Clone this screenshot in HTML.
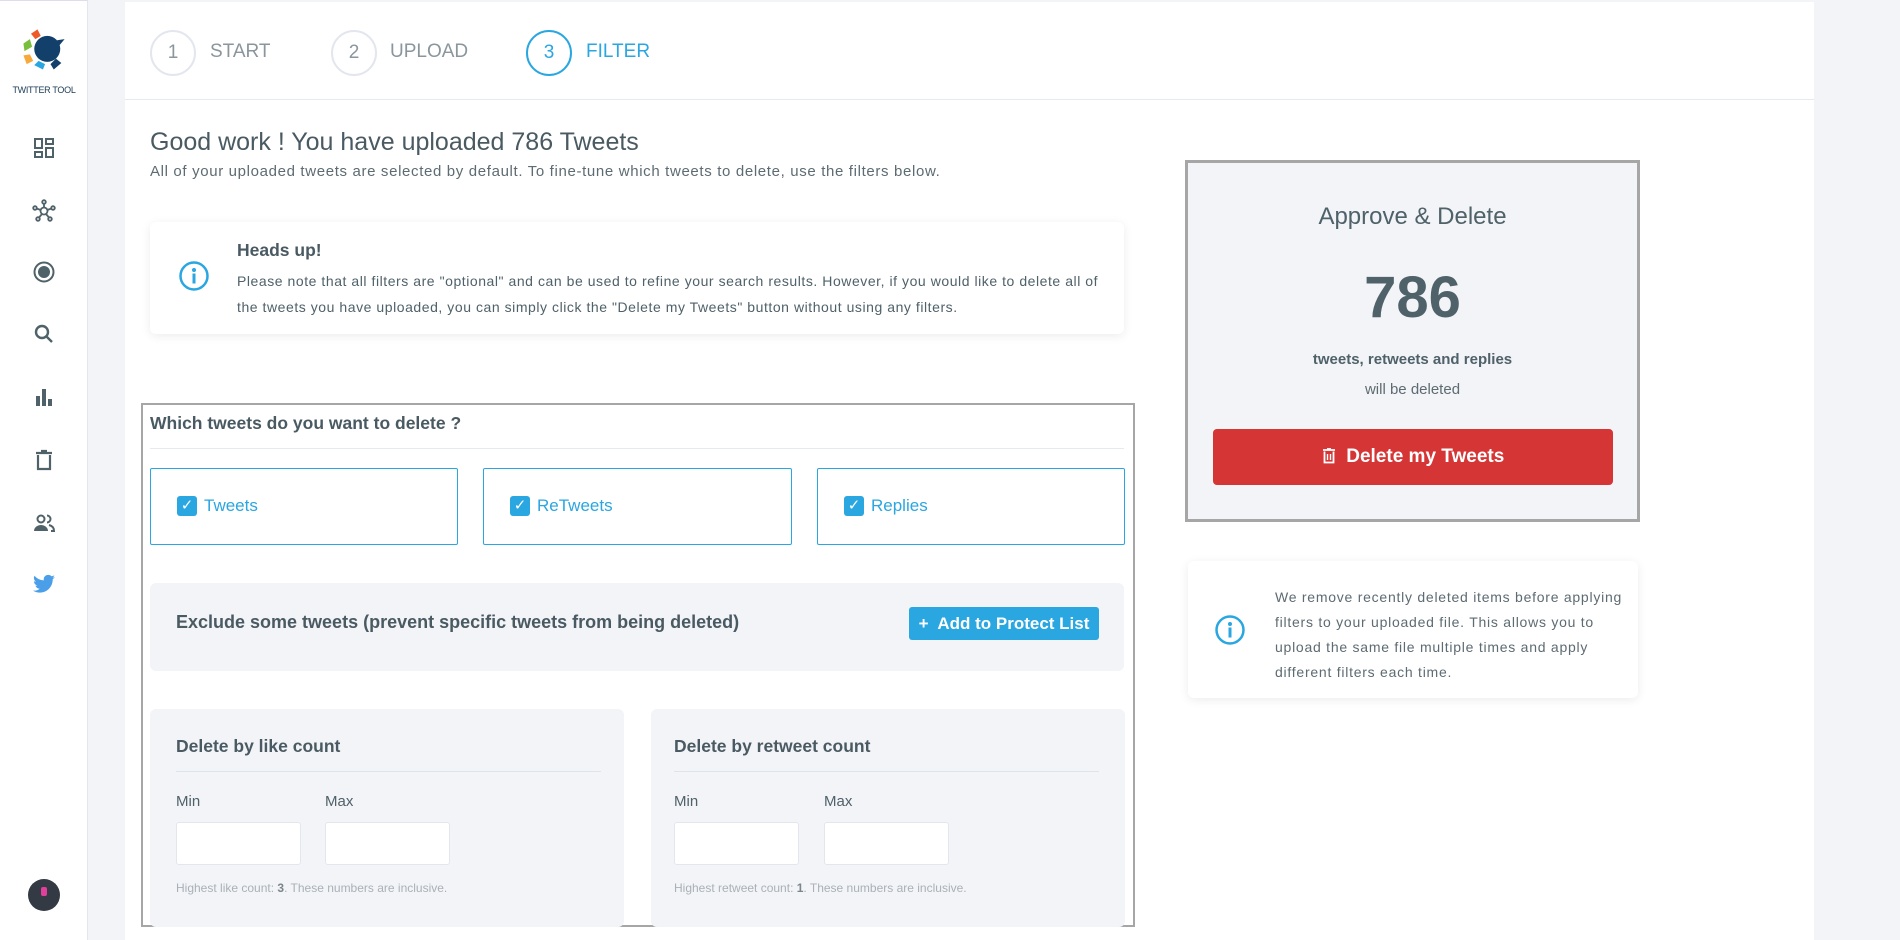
<!DOCTYPE html>
<html><head><meta charset="utf-8"><style>
*{box-sizing:border-box;margin:0;padding:0}
body{width:1900px;height:940px;overflow:hidden;background:#f3f4f8;font-family:"Liberation Sans",sans-serif;color:#4f6169;position:relative}
.abs{position:absolute}
#side{left:0;top:0;width:88px;height:940px;background:#fff;border-right:1px solid #e3e6ee;border-top:1px solid #dde}
#main{left:125px;top:2px;width:1689px;height:938px;background:#fff}
.ic{position:absolute;left:32px;width:24px;height:24px}
.step{position:absolute;top:28px;width:46px;height:46px;border:2px solid #e3e6ee;border-radius:50%;text-align:center;line-height:42px;font-size:19px;color:#8a969c}
.stl{position:absolute;top:39px;font-size:19px;color:#8a969c}
.cb{position:absolute;top:468px;height:77px;border:1px solid #2aa6e0;border-radius:2px}
.cb span{position:absolute;left:26px;top:27px;width:20px;height:20px;background:#2aa6e0;border-radius:3px;color:#fff;font-size:15px;text-align:center;line-height:20px}
.cb b{position:absolute;left:53px;top:27px;font-weight:normal;color:#2aa6e0;font-size:17px}
.panel{position:absolute;background:#f3f4f8;border-radius:6px}
.inp{position:absolute;width:125px;height:43px;background:#fff;border:1px solid #e3e6ee;border-radius:3px}
</style></head><body>
<div id="side" class="abs">
<svg class="abs" style="left:18px;top:24px" width="52" height="50" viewBox="0 0 48 46">
<path d="M12 8 L18 4 L21 10 L16 13Z" fill="#ef5a28"/>
<path d="M5 17 L11 13 L13 20 L6 24Z" fill="#7bbd3c"/>
<path d="M5 28 L11 27 L14 33 L8 36Z" fill="#f7a93b"/>
<path d="M15 37 L19 33 L25 36 L23 41Z" fill="#2aa6e0"/>
<circle cx="27" cy="22" r="12" fill="#12406b"/>
<path d="M36 14 L43 13 L38 19Z" fill="#12406b"/>
<path d="M30 36 L35 31 L40 35 L33 41Z" fill="#12406b"/>
</svg>
<div class="abs" style="left:0;width:88px;top:84px;text-align:center;font-size:9px;color:#1a3a55;letter-spacing:-0.3px">TWITTER TOOL</div>
<svg class="ic" style="top:135px" viewBox="0 0 24 24" fill="none" stroke="#4f6169" stroke-width="2"><rect x="3" y="3" width="7" height="9"/><rect x="14" y="3" width="7" height="5"/><rect x="14" y="12" width="7" height="9"/><rect x="3" y="16" width="7" height="5"/></svg>
<svg class="ic" style="top:198px" viewBox="0 0 24 24" fill="none" stroke="#4f6169" stroke-width="1.8"><circle cx="12" cy="12" r="3.5"/><circle cx="12" cy="3" r="1.8"/><circle cx="3" cy="9" r="1.8"/><circle cx="21" cy="9" r="1.8"/><circle cx="6" cy="20" r="1.8"/><circle cx="18" cy="20" r="1.8"/><path d="M12 5v3.5M4.8 9.6l4 1.4M19.2 9.6l-4 1.4M7 18.5l3-3.5M17 18.5l-3-3.5"/></svg>
<svg class="ic" style="top:259px" viewBox="0 0 24 24"><circle cx="12" cy="12" r="9.5" fill="none" stroke="#4f6169" stroke-width="2"/><circle cx="12" cy="12" r="6" fill="#4f6169"/></svg>
<svg class="ic" style="top:321px" viewBox="0 0 24 24" fill="none" stroke="#4f6169" stroke-width="2.4"><circle cx="10" cy="10" r="6"/><path d="M14.5 14.5L20 20"/></svg>
<svg class="ic" style="top:384px" viewBox="0 0 24 24" fill="#4f6169"><rect x="4" y="11" width="4" height="10"/><rect x="10" y="4" width="4" height="17"/><rect x="16" y="14" width="4" height="7"/></svg>
<svg class="ic" style="top:447px" viewBox="0 0 24 24" fill="none" stroke="#4f6169" stroke-width="2.2"><path d="M4 5h16M9 3h6M6 7v14h12V7"/></svg>
<svg class="ic" style="top:510px" viewBox="0 0 24 24" fill="#4f6169"><circle cx="9" cy="8" r="3.5" fill="none" stroke="#4f6169" stroke-width="2"/><path d="M2 20c0-4 4-6 7-6s7 2 7 6z"/><path d="M15 4.5a3.5 3.5 0 010 7M17 14c2 .5 5 2 5 6h-3" fill="none" stroke="#4f6169" stroke-width="2"/></svg>
<svg class="ic" style="top:571px" viewBox="0 0 24 24" fill="#4a9fe8"><path d="M23 5c-.8.4-1.7.6-2.6.7.9-.6 1.6-1.4 2-2.5-.9.5-1.8.9-2.9 1.1A4.5 4.5 0 0011.8 8.4 12.8 12.8 0 012.5 3.7a4.5 4.5 0 001.4 6c-.7 0-1.4-.2-2-.6 0 2.2 1.6 4 3.6 4.4-.7.2-1.4.2-2 .1.6 1.8 2.2 3.1 4.2 3.1A9 9 0 011 18.6 12.8 12.8 0 007.9 20.6c8.3 0 12.8-6.9 12.8-12.8v-.6c.9-.6 1.7-1.4 2.3-2.2z"/></svg>
<div class="abs" style="left:28px;top:878px;width:32px;height:32px;border-radius:50%;background:#333a44"></div>
<div class="abs" style="left:41px;top:886px;width:6px;height:9px;background:#e0409a;border-radius:2px"></div>
</div>
<div id="main" class="abs">
<div class="abs" style="left:0;top:97px;width:1689px;height:1px;background:#e6e9f0"></div>
<div class="step" style="left:25px">1</div><div class="stl" style="left:85px">START</div>
<div class="step" style="left:206px">2</div><div class="stl" style="left:265px">UPLOAD</div>
<div class="step" style="left:401px;border-color:#2aa6e0;color:#2aa6e0">3</div><div class="stl" style="left:461px;color:#2aa6e0">FILTER</div>
</div>
<div class="abs" style="left:150px;top:128px;font-size:25px;color:#4a5a62">Good work ! You have uploaded 786 Tweets</div>
<div class="abs" style="left:150px;top:163px;font-size:15px;letter-spacing:0.65px;color:#5d6b72">All of your uploaded tweets are selected by default. To fine-tune which tweets to delete, use the filters below.</div>
<div class="abs" style="left:150px;top:222px;width:974px;height:112px;background:#fff;border-radius:6px;box-shadow:0 2px 10px rgba(0,0,0,.08)"></div>
<svg class="abs" style="left:178px;top:260px" width="32" height="32" viewBox="0 0 32 32"><circle cx="16" cy="16" r="13.5" fill="none" stroke="#2aa6e0" stroke-width="2.5"/><circle cx="16" cy="10" r="2" fill="#2aa6e0"/><rect x="14.5" y="13.5" width="3" height="10" fill="#2aa6e0"/></svg>
<div class="abs" style="left:237px;top:240px;font-size:17.5px;font-weight:bold;color:#4a5a62">Heads up!</div>
<div class="abs" style="left:237px;top:268px;white-space:nowrap;font-size:14px;letter-spacing:0.55px;line-height:26px;color:#4f6169">Please note that all filters are "optional" and can be used to refine your search results. However, if you would like to delete all of<br>the tweets you have uploaded, you can simply click the "Delete my Tweets" button without using any filters.</div>

<div class="abs" style="left:141px;top:403px;width:994px;height:524px;border:2px solid #a6a6a6"></div>
<div class="abs" style="left:150px;top:413px;font-size:17.5px;font-weight:bold;color:#4a5a62">Which tweets do you want to delete ?</div>
<div class="abs" style="left:150px;top:448px;width:974px;height:1px;background:#e6e9f0"></div>
<div class="cb" style="left:150px;width:308px"><span>✓</span><b>Tweets</b></div>
<div class="cb" style="left:483px;width:309px"><span>✓</span><b>ReTweets</b></div>
<div class="cb" style="left:817px;width:308px"><span>✓</span><b>Replies</b></div>
<div class="panel" style="left:150px;top:583px;width:974px;height:88px"></div>
<div class="abs" style="left:176px;top:612px;font-size:18px;font-weight:bold;color:#4a5a62">Exclude some tweets (prevent specific tweets from being deleted)</div>
<div class="abs" style="left:909px;top:607px;width:190px;height:33px;background:#2aa6e0;border-radius:3px;color:#fff;font-size:17px;font-weight:bold;line-height:33px;text-align:center">+&nbsp; Add to Protect List</div>
<div class="panel" style="left:150px;top:709px;width:474px;height:218px"></div>
<div class="panel" style="left:651px;top:709px;width:474px;height:218px"></div>
<div class="abs" style="left:176px;top:736px;font-size:17.5px;font-weight:bold;color:#4a5a62">Delete by like count</div>
<div class="abs" style="left:674px;top:736px;font-size:17.5px;font-weight:bold;color:#4a5a62">Delete by retweet count</div>
<div class="abs" style="left:176px;top:771px;width:425px;height:1px;background:#dfe3ea"></div>
<div class="abs" style="left:674px;top:771px;width:425px;height:1px;background:#dfe3ea"></div>
<div class="abs" style="left:176px;top:793px;font-size:15px">Min</div><div class="abs" style="left:325px;top:793px;font-size:15px">Max</div>
<div class="abs" style="left:674px;top:793px;font-size:15px">Min</div><div class="abs" style="left:824px;top:793px;font-size:15px">Max</div>
<div class="inp" style="left:176px;top:822px"></div><div class="inp" style="left:325px;top:822px"></div>
<div class="inp" style="left:674px;top:822px"></div><div class="inp" style="left:824px;top:822px"></div>
<div class="abs" style="left:176px;top:881px;font-size:12px;color:#a9b1b6">Highest like count: <b style="color:#7a868c">3</b>. These numbers are inclusive.</div>
<div class="abs" style="left:674px;top:881px;font-size:12px;color:#a9b1b6">Highest retweet count: <b style="color:#7a868c">1</b>. These numbers are inclusive.</div>

<div class="abs" style="left:1185px;top:160px;width:455px;height:362px;border:3px solid #a6a6a6;background:#f3f4f8"></div>
<div class="abs" style="left:1185px;top:203px;width:455px;text-align:center;font-size:24px;color:#4f6169">Approve &amp; Delete</div>
<div class="abs" style="left:1185px;top:264px;width:455px;text-align:center;font-size:58px;font-weight:bold;color:#4f6169">786</div>
<div class="abs" style="left:1185px;top:351px;width:455px;text-align:center;font-size:15px;font-weight:bold;color:#4f6169">tweets, retweets and replies</div>
<div class="abs" style="left:1185px;top:381px;width:455px;text-align:center;font-size:15px;color:#5d6b72">will be deleted</div>
<div class="abs" style="left:1213px;top:429px;width:400px;height:56px;background:#d63535;border-radius:4px;color:#fff;font-size:19px;font-weight:bold;text-align:center;line-height:56px"><svg width="14" height="16" viewBox="0 0 14 16" style="vertical-align:-2px"><path d="M1 2h12M5 1h4M2.5 3.5v11h9v-11" fill="none" stroke="#fff" stroke-width="1.8"/><path d="M5.5 6v6M8.5 6v6" stroke="#fff" stroke-width="1.4"/></svg>&nbsp; Delete my Tweets</div>
<div class="abs" style="left:1188px;top:561px;width:450px;height:137px;background:#fff;border-radius:6px;box-shadow:0 2px 10px rgba(0,0,0,.08)"></div>
<svg class="abs" style="left:1214px;top:614px" width="32" height="32" viewBox="0 0 32 32"><circle cx="16" cy="16" r="13.5" fill="none" stroke="#2aa6e0" stroke-width="2.5"/><circle cx="16" cy="10" r="2" fill="#2aa6e0"/><rect x="14.5" y="13.5" width="3" height="10" fill="#2aa6e0"/></svg>
<div class="abs" style="left:1275px;top:585px;white-space:nowrap;font-size:14px;letter-spacing:0.75px;line-height:25px;color:#5d6b72">We remove recently deleted items before applying<br>filters to your uploaded file. This allows you to<br>upload the same file multiple times and apply<br>different filters each time.</div>
</body></html>
